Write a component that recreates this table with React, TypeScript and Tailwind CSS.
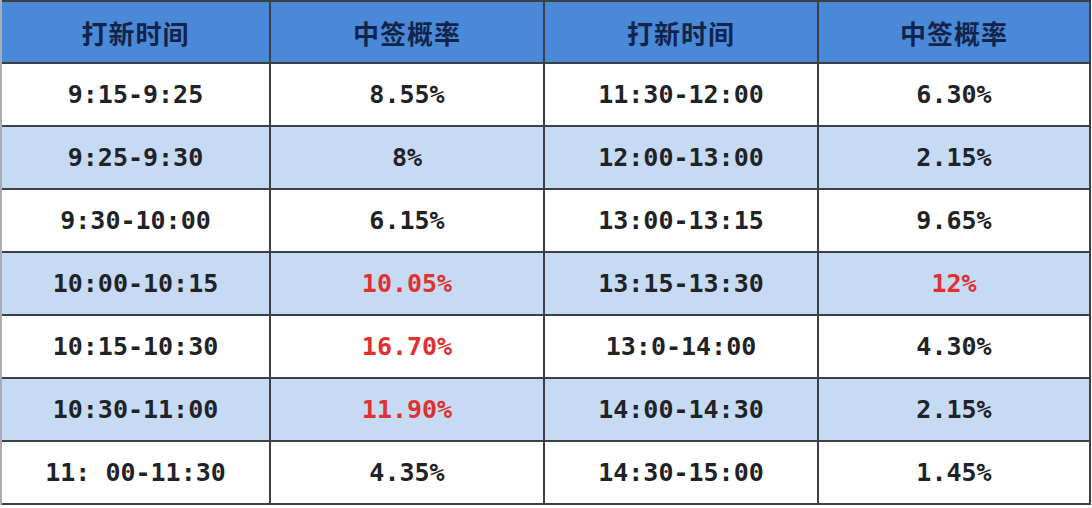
import React from "react";

type Cell = { t: string; red?: boolean };
const rows: Cell[][] = [
  [{ t: "9:15-9:25" }, { t: "8.55%" }, { t: "11:30-12:00" }, { t: "6.30%" }],
  [{ t: "9:25-9:30" }, { t: "8%" }, { t: "12:00-13:00" }, { t: "2.15%" }],
  [{ t: "9:30-10:00" }, { t: "6.15%" }, { t: "13:00-13:15" }, { t: "9.65%" }],
  [{ t: "10:00-10:15" }, { t: "10.05%", red: true }, { t: "13:15-13:30" }, { t: "12%", red: true }],
  [{ t: "10:15-10:30" }, { t: "16.70%", red: true }, { t: "13:0-14:00" }, { t: "4.30%" }],
  [{ t: "10:30-11:00" }, { t: "11.90%", red: true }, { t: "14:00-14:30" }, { t: "2.15%" }],
  [{ t: "11: 00-11:30" }, { t: "4.35%" }, { t: "14:30-15:00" }, { t: "1.45%" }],
];

const headers = ["打新时间", "中签概率", "打新时间", "中签概率"];

export default function App() {
  return (
    <div className="w-[1092px] h-[508px] bg-white">
      <div className="w-[1091px] grid grid-cols-[267px_272px_272px_270px] grid-rows-[60px_repeat(7,61px)] gap-[2px] bg-[#3c3f44] pt-[2px] pr-[2px] pb-[2px] border-l-2 border-l-[#a9adb3]">
        {headers.map((h, i) => (
          <div
            key={"h" + i}
            className="bg-[#4a89d8] flex items-center justify-center text-[26px] font-bold tracking-[1px] text-[#13244a]"
            style={{ fontFamily: '"Noto Sans CJK SC", "Noto Sans", sans-serif' }}
          >
            {h}
          </div>
        ))}
        {rows.map((r, ri) =>
          r.map((c, ci) => (
            <div
              key={ri + "-" + ci}
              className={`${ri % 2 === 1 ? "bg-[#c6dbf3]" : "bg-white"} flex items-center justify-center text-[25px] font-bold ${c.red ? "text-[#e0302f]" : "text-[#1f2226]"}`}
              style={{ fontFamily: '"DejaVu Sans Mono", "Liberation Mono", monospace', whiteSpace: "pre" }}
            >
              {c.t}
            </div>
          ))
        )}
      </div>
    </div>
  );
}
